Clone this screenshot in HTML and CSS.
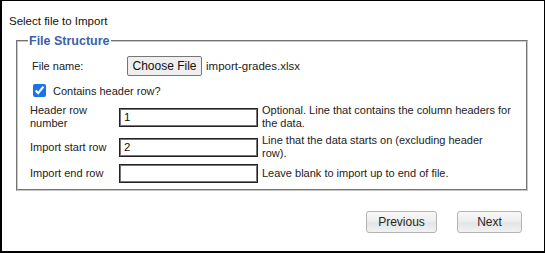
FILE: index.html
```html
<!DOCTYPE html>
<html>
<head>
    <meta charset="utf-8">
    <link rel="stylesheet" href="styles.css">
</head>
<body>
<div class="page">
    <div class="title">Select file to Import</div>

    <fieldset class="structure">
        <legend>File Structure</legend>

        <div class="filerow">
            <span class="filelabel">File name:</span>
            <button class="choose" type="button">Choose File</button>
            <span class="filename">import-grades.xlsx</span>
        </div>

        <label class="checkrow">
            <input type="checkbox" checked>
            <span>Contains header row?</span>
        </label>

        <div class="fields">
            <label class="lbl">Header row number</label>
            <input class="txt" type="text" value="1">
            <div class="help">Optional. Line that contains the column headers for the data.</div>

            <label class="lbl">Import start row</label>
            <input class="txt" type="text" value="2">
            <div class="help">Line that the data starts on (excluding header<br>row).</div>

            <label class="lbl">Import end row</label>
            <input class="txt" type="text" value="">
            <div class="help">Leave blank to import up to end of file.</div>
        </div>
    </fieldset>

    <div class="actions">
        <button class="navbtn prev" type="button">Previous</button>
        <button class="navbtn next" type="button">Next</button>
    </div>
</div>
</body>
</html>
```

FILE: styles.css
```css
* {
    box-sizing: border-box;
}

body {
    margin: 0;
    font-family: "Liberation Sans", Arial, sans-serif;
    color: #222;
}

.page {
    width: 545px;
    height: 253px;
    border: 1px solid #000;
    border-left-width: 2px;
    border-bottom-width: 2px;
    padding: 13px 16px 0 7px;
}

.title {
    font-size: 11.5px;
    line-height: 14px;
    color: #111;
}

.structure {
    margin: 5px 0 0 7px;
    padding: 7px 6px 6px 12px;
    border: 2px groove #c8c8c8;
    min-width: 0;
}

.structure legend {
    font-size: 12.5px;
    font-weight: bold;
    line-height: 16px;
    color: #3b62a6;
    padding: 0 1px;
    margin-left: -2px;
}

.filerow {
    display: flex;
    align-items: center;
    height: 20px;
    font-size: 11px;
}

.filelabel {
    width: 97px;
    padding-left: 2px;
}

.choose {
    height: 20px;
    width: 75px;
    padding: 0;
    font-family: "Liberation Sans", Arial, sans-serif;
    font-size: 12px;
    color: #111;
    background: #efefef;
    border: 1px solid #767676;
    border-radius: 2px;
}

.filename {
    margin-left: 4px;
    font-size: 11.5px;
}

.checkrow {
    display: flex;
    align-items: center;
    margin-top: 8px;
    height: 13px;
    font-size: 11px;
}

.checkrow input {
    width: 13px;
    height: 13px;
    margin: 0 7px 0 3px;
    accent-color: #1a73e8;
}

.fields {
    display: grid;
    grid-template-columns: 85px 139px 1fr;
    column-gap: 4px;
    row-gap: 4px;
    align-items: center;
    margin-top: 7px;
    font-size: 11px;
    line-height: 13px;
}

.lbl {
    padding-right: 4px;
}

.txt {
    width: 139px;
    height: 19px;
    margin: 0;
    padding: 0 4px;
    font-family: "Liberation Sans", Arial, sans-serif;
    font-size: 11.5px;
    color: #111;
    border: 1px solid #222;
    box-shadow: inset 0 0 0 1px #777;
    outline: none;
}

.actions {
    display: flex;
    justify-content: flex-end;
    gap: 20px;
    margin: 20px 6px 0 0;
}

.navbtn {
    height: 22px;
    padding: 0;
    font-family: "Liberation Sans", Arial, sans-serif;
    font-size: 12px;
    color: #2a2418;
    border: 1px solid #b4b4b4;
    border-radius: 3px;
    background: linear-gradient(#f8f8f8, #eeeeee 45%, #e2e5e9 55%, #f2f2f2);
}

.prev {
    width: 71px;
}

.next {
    width: 65px;
}
```
